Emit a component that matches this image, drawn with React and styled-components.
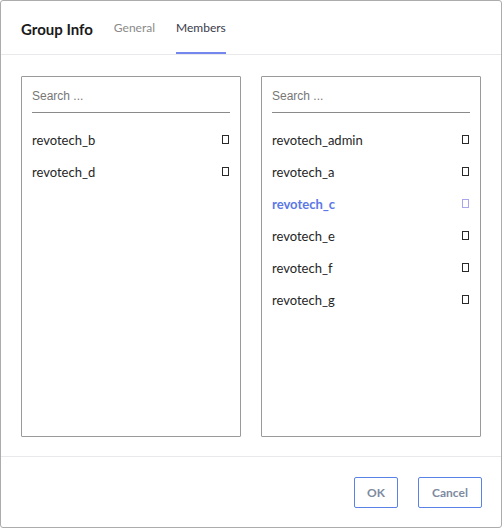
import React from 'react';
import styled, { createGlobalStyle } from 'styled-components';

const Global = createGlobalStyle`
  html, body {
    margin: 0;
    padding: 0;
    background: #fff;
  }
  * {
    box-sizing: border-box;
  }
`;

const Dialog = styled.div`
  width: 502px;
  height: 528px;
  border: 1px solid #acacac;
  border-radius: 3px;
  background: #fff;
  display: flex;
  flex-direction: column;
  font-family: Lato, 'Liberation Sans', sans-serif;
`;

const Header = styled.div`
  height: 55px;
  display: flex;
  align-items: stretch;
  padding-left: 20px;
  border-bottom: 1px solid #e9e9ec;
`;

const Title = styled.div`
  font-size: 15px;
  font-weight: 700;
  color: #1a1a1a;
  display: flex;
  align-items: center;
  padding-top: 4px;
  margin-right: 21px;
`;

const Tab = styled.div`
  font-size: 12px;
  color: ${(p) => (p.$active ? '#3a3a4a' : '#8a8a8a')};
  display: flex;
  align-items: center;
  padding-top: 2px;
  margin-right: 21px;
  border-bottom: 2px solid ${(p) => (p.$active ? '#7487ef' : 'transparent')};
`;

const Body = styled.div`
  flex: 1;
  display: flex;
  gap: 20px;
  padding: 21px 20px 19px 20px;
  border-bottom: 1px solid #e9e9ec;
`;

const Panel = styled.div`
  width: 220px;
  height: 361px;
  border: 1px solid #9a9a9a;
  border-radius: 1px;
  padding: 10px 10px 0;
  display: flex;
  flex-direction: column;
`;

const Search = styled.input`
  height: 26px;
  border: none;
  border-bottom: 1px solid #8a8a8a;
  padding: 2px 0 8px;
  font-family: 'Liberation Sans', Arial, sans-serif;
  font-size: 12px;
  color: #333;
  outline: none;
  &::placeholder {
    color: #777;
  }
`;

const List = styled.div`
  padding-top: 11px;
  display: flex;
  flex-direction: column;
`;

const Row = styled.div`
  height: 32px;
  display: flex;
  align-items: center;
  justify-content: space-between;
  font-size: 13px;
  font-weight: ${(p) => (p.$active ? 700 : 400)};
  color: ${(p) => (p.$active ? '#5b78e6' : '#262626')};
`;

const Check = styled.span`
  width: 7px;
  height: 9px;
  margin-right: 1px;
  border: 1px solid ${(p) => (p.$active ? '#a9a6ee' : '#2a2a2a')};
  background: #fff;
`;

const Footer = styled.div`
  height: 71px;
  display: flex;
  justify-content: flex-end;
  align-items: flex-start;
  gap: 20px;
  padding: 20px 19px 0 0;
`;

const Button = styled.button`
  height: 31px;
  min-width: ${(p) => p.$w}px;
  border: 1px solid #5a82e6;
  border-radius: 2px;
  background: #fff;
  color: #7d8aa0;
  font-family: Lato, 'Liberation Sans', sans-serif;
  font-size: 12px;
  font-weight: 700;
  padding: 0 10px;
`;

const left = ['revotech_b', 'revotech_d'];
const right = ['revotech_admin', 'revotech_a', 'revotech_c', 'revotech_e', 'revotech_f', 'revotech_g'];

function MemberPanel({ items, active }) {
  return (
    <Panel>
      <Search placeholder="Search ..." />
      <List>
        {items.map((name) => (
          <Row key={name} $active={name === active}>
            {name}
            <Check $active={name === active} />
          </Row>
        ))}
      </List>
    </Panel>
  );
}

export default function App() {
  return (
    <>
      <Global />
      <Dialog>
        <Header>
          <Title>Group Info</Title>
          <Tab>General</Tab>
          <Tab $active>Members</Tab>
        </Header>
        <Body>
          <MemberPanel items={left} />
          <MemberPanel items={right} active="revotech_c" />
        </Body>
        <Footer>
          <Button $w={44}>OK</Button>
          <Button $w={64}>Cancel</Button>
        </Footer>
      </Dialog>
    </>
  );
}
